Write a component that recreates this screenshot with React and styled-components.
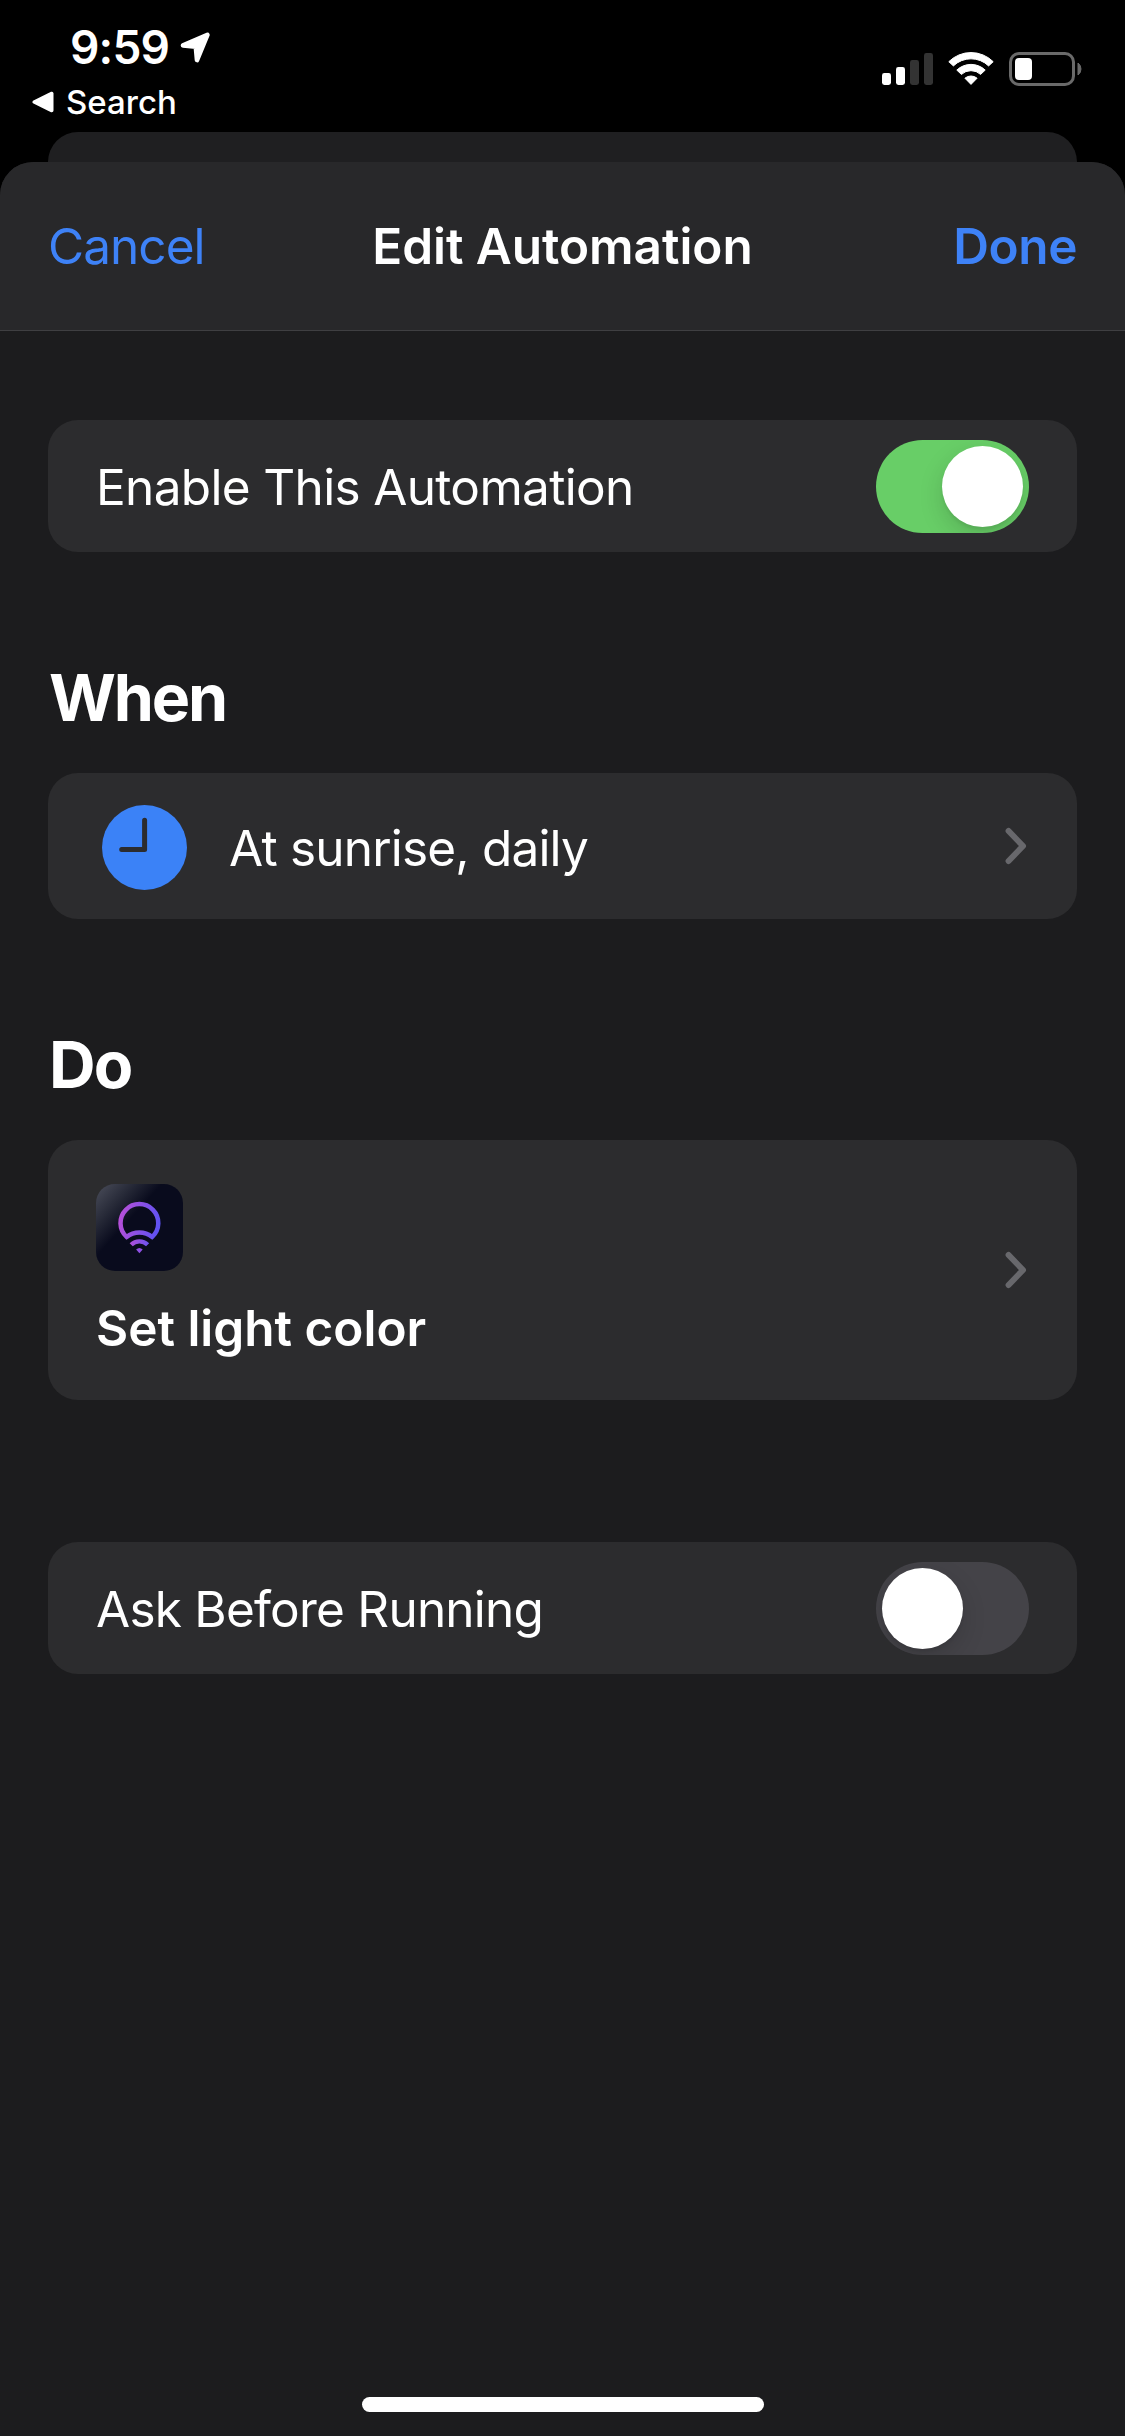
import React, { useState } from "react";
import styled, { createGlobalStyle } from "styled-components";

const GlobalStyle = createGlobalStyle`
  * { box-sizing: border-box; }
  html, body { margin: 0; padding: 0; background: #000; }
  body { font-family: Inter, "Liberation Sans", sans-serif; color: #fff; }
`;

const Screen = styled.div`
  width: 1125px;
  height: 2436px;
  display: flex;
  flex-direction: column;
  background: #000;
  overflow: hidden;
`;

const StatusBar = styled.div`
  height: 132px;
  flex: none;
  display: flex;
  justify-content: space-between;
  padding: 22px 43px 0 32px;
`;

const StatusLeft = styled.div`
  display: flex;
  flex-direction: column;
`;

const ClockRow = styled.div`
  display: flex;
  align-items: center;
  height: 50px;
  padding-left: 38px;
  gap: 11px;
`;

const Time = styled.span`
  font-size: 46px;
  line-height: 50px;
  font-weight: 600;
  letter-spacing: ${(p) => p.$tracking}px;
`;

const BackLink = styled.div`
  display: flex;
  align-items: center;
  height: 40px;
  margin-top: 10px;
  gap: 11px;
  font-size: 33px;
  line-height: 40px;
  font-weight: 500;
`;

const StatusRight = styled.div`
  display: flex;
  align-items: flex-end;
  height: 64px;
  gap: 15px;
`;

const SheetBehind = styled.div`
  flex: none;
  height: 30px;
  margin: 0 48px;
  border-radius: 30px 30px 0 0;
  background: #1f1f21;
`;

const Sheet = styled.div`
  flex: 1;
  display: flex;
  flex-direction: column;
  border-radius: 33px 33px 0 0;
  overflow: hidden;
  background: #1c1c1e;
`;

const NavBar = styled.div`
  flex: none;
  display: grid;
  grid-template-columns: 1fr auto 1fr;
  align-items: center;
  height: 169px;
  padding: 0 48px;
  background: #28282a;
  border-bottom: 1px solid #3f3f42;
`;

const NavButton = styled.button`
  justify-self: ${(p) => (p.$end ? "end" : "start")};
  padding: 0;
  border: 0;
  background: none;
  font: inherit;
  font-size: 49.5px;
  line-height: 60px;
  font-weight: ${(p) => (p.$end ? 600 : 400)};
  letter-spacing: ${(p) => p.$tracking}px;
  color: #3e82f7;
`;

const NavTitle = styled.h1`
  margin: 0;
  font-size: 49.5px;
  line-height: 60px;
  font-weight: 600;
  letter-spacing: ${(p) => p.$tracking}px;
`;

const Content = styled.main`
  flex: 1;
  display: flex;
  flex-direction: column;
  padding: 89px 48px 0;
`;

const SectionTitle = styled.h2`
  margin: 116px 0 45px 1px;
  font-size: 64.5px;
  line-height: 60px;
  font-weight: 700;
  letter-spacing: ${(p) => p.$tracking}px;
`;

const Card = styled.div`
  display: flex;
  align-items: center;
  justify-content: space-between;
  height: ${(p) => p.$height}px;
  margin-top: ${(p) => p.$gap || 0}px;
  padding: 0 48px;
  border-radius: 30px;
  background: #2c2c2e;
`;

const Label = styled.span`
  font-size: 49.5px;
  line-height: 60px;
  font-weight: ${(p) => p.$weight || 400};
  letter-spacing: ${(p) => p.$tracking}px;
  padding-top: ${(p) => p.$drop || 0}px;
`;

const Trigger = styled.div`
  display: flex;
  align-items: center;
  gap: 42px;
  padding: 3px 0 0 6px;
`;

const Action = styled.div`
  display: flex;
  flex-direction: column;
  gap: 27px;
  padding-top: 2px;
`;

const Track = styled.button`
  display: flex;
  align-items: center;
  justify-content: ${(p) => (p.$on ? "flex-end" : "flex-start")};
  width: 153px;
  height: 93px;
  padding: 0 6px;
  border: 0;
  border-radius: 47px;
  overflow: hidden;
  background: ${(p) => (p.$on ? "#68ce67" : "#444348")};
`;

const Knob = styled.span`
  width: 81px;
  height: 81px;
  border-radius: 50%;
  background: #fff;
  box-shadow: 0 9px 24px rgba(0, 0, 0, 0.15), 0 3px 3px rgba(0, 0, 0, 0.06);
`;

const HomeArea = styled.div`
  flex: none;
  display: flex;
  justify-content: center;
  height: 39px;
`;

const HomeIndicator = styled.div`
  width: 402px;
  height: 15px;
  border-radius: 8px;
  background: #fff;
`;

const Icon = styled.svg`
  display: block;
  flex: none;
`;

function LocationArrow() {
  return (
    <Icon width="30" height="31" viewBox="0 0 30 31">
      <path
        d="M3 13.4 L27.4 2.9 L17 28 L15.8 14.6 Z"
        fill="#fff"
        stroke="#fff"
        strokeWidth="4.6"
        strokeLinejoin="round"
      />
    </Icon>
  );
}

function BackTriangle() {
  return (
    <Icon width="23" height="22" viewBox="0 0 23 22">
      <path
        d="M2.2 11 L19.8 2.4 V19.6 Z"
        fill="#fff"
        stroke="#fff"
        strokeWidth="3.4"
        strokeLinejoin="round"
      />
    </Icon>
  );
}

function Signal() {
  return (
    <Icon width="51" height="33" viewBox="0 0 51 33">
      <rect x="0" y="20" width="9" height="12" rx="2.4" fill="#fff" />
      <rect x="14" y="14" width="9" height="18" rx="2.4" fill="#fff" />
      <rect x="28" y="7" width="9" height="25" rx="2.4" fill="#333" />
      <rect x="42" y="0" width="9" height="32" rx="2.4" fill="#333" />
    </Icon>
  );
}

function Wifi() {
  return (
    <Icon width="46" height="34" viewBox="0 0 46 34">
      <g fill="#fff" stroke="#fff" strokeWidth="1" strokeLinejoin="round">
        <path d="M0.8 9.7 A31.5 31.5 0 0 1 45.2 9.7 L40.6 13.9 A25.4 25.4 0 0 0 5.4 13.9 Z" />
        <path d="M8.8 18.1 A20.5 20.5 0 0 1 37.2 18.1 L32.6 22.4 A14.2 14.2 0 0 0 13.4 22.4 Z" />
        <path d="M16.9 26.2 A9.6 9.6 0 0 1 29.1 26.2 L23 32.4 Z" />
      </g>
    </Icon>
  );
}

function Battery() {
  return (
    <Icon width="73" height="34" viewBox="0 0 73 34">
      <rect x="1.5" y="1.5" width="63" height="31" rx="8.5" fill="none" stroke="#6a6a6a" strokeWidth="3" />
      <rect x="6" y="6" width="17" height="22" rx="4" fill="#fff" />
      <path d="M69 11 A7.5 7.5 0 0 1 69 23 Z" fill="#6a6a6a" stroke="#6a6a6a" />
    </Icon>
  );
}

function ClockIcon() {
  return (
    <Icon width="85" height="85" viewBox="0 0 85 85">
      <circle cx="42.5" cy="42.5" r="42.5" fill="#3b82f7" />
      <path
        d="M42.6 15.2 V44.6 H19.7"
        fill="none"
        stroke="#2c2c2e"
        strokeWidth="5"
        strokeLinecap="round"
        strokeLinejoin="round"
      />
    </Icon>
  );
}

function BulbAppIcon() {
  return (
    <Icon width="87" height="87" viewBox="0 0 87 87">
      <defs>
        <linearGradient id="tile" gradientUnits="userSpaceOnUse" x1="4" y1="4" x2="36" y2="33">
          <stop offset="0" stopColor="#444754" />
          <stop offset="0.5" stopColor="#272a38" />
          <stop offset="1" stopColor="#090b1d" />
        </linearGradient>
        <linearGradient id="bulb" gradientUnits="userSpaceOnUse" x1="22" y1="34" x2="65" y2="42">
          <stop offset="0" stopColor="#b94fd8" />
          <stop offset="1" stopColor="#5a52f4" />
        </linearGradient>
        <linearGradient id="wave" gradientUnits="userSpaceOnUse" x1="34" y1="58" x2="53" y2="60">
          <stop offset="0" stopColor="#b04fd9" />
          <stop offset="1" stopColor="#6a52f0" />
        </linearGradient>
      </defs>
      <rect width="87" height="87" rx="19" fill="url(#tile)" />
      <path
        d="M30.6 52.9 A18.9 18.9 0 1 1 56.2 52.9 A20.4 20.4 0 0 0 30.6 52.9 Z"
        fill="none"
        stroke="url(#bulb)"
        strokeWidth="4.5"
      />
      <path d="M35.2 60.8 A11.6 11.6 0 0 1 51.6 60.8" fill="none" stroke="url(#wave)" strokeWidth="4.4" />
      <path d="M40.1 65.6 Q43.4 62.6 46.7 65.6 L43.4 69.2 Z" fill="#8f50e4" />
    </Icon>
  );
}

function Chevron() {
  return (
    <Icon width="24" height="38" viewBox="0 0 24 38">
      <path
        d="M3.6 4 L18 19 L3.6 34"
        fill="none"
        stroke="#68686c"
        strokeWidth="6"
        strokeLinecap="round"
        strokeLinejoin="round"
      />
    </Icon>
  );
}

function Toggle({ initial }) {
  const [on, setOn] = useState(initial);
  return (
    <Track $on={on} role="switch" aria-checked={on} onClick={() => setOn(!on)}>
      <Knob />
    </Track>
  );
}

export default function App() {
  return (
    <>
      <GlobalStyle />
      <Screen>
        <StatusBar>
          <StatusLeft>
            <ClockRow>
              <Time $tracking={-0.8}>9:59</Time>
              <LocationArrow />
            </ClockRow>
            <BackLink>
              <BackTriangle />
              <span>Search</span>
            </BackLink>
          </StatusLeft>
          <StatusRight>
            <Signal />
            <Wifi />
            <Battery />
          </StatusRight>
        </StatusBar>
        <SheetBehind />
        <Sheet>
          <NavBar>
            <NavButton $tracking={-0.95}>Cancel</NavButton>
            <NavTitle $tracking={-0.05}>Edit Automation</NavTitle>
            <NavButton $end $tracking={-0.4}>Done</NavButton>
          </NavBar>
          <Content>
            <Card $height={132}>
              <Label $tracking={-0.66} $drop={2}>Enable This Automation</Label>
              <Toggle initial={true} />
            </Card>
            <SectionTitle $tracking={-2.2}>When</SectionTitle>
            <Card $height={146}>
              <Trigger>
                <ClockIcon />
                <Label $tracking={-0.8}>At sunrise, daily</Label>
              </Trigger>
              <Chevron />
            </Card>
            <SectionTitle $tracking={-1.8}>Do</SectionTitle>
            <Card $height={260}>
              <Action>
                <BulbAppIcon />
                <Label $weight={600} $tracking={0}>Set light color</Label>
              </Action>
              <Chevron />
            </Card>
            <Card $height={132} $gap={142}>
              <Label $tracking={-0.77} $drop={2}>Ask Before Running</Label>
              <Toggle initial={false} />
            </Card>
          </Content>
          <HomeArea>
            <HomeIndicator />
          </HomeArea>
        </Sheet>
      </Screen>
    </>
  );
}
